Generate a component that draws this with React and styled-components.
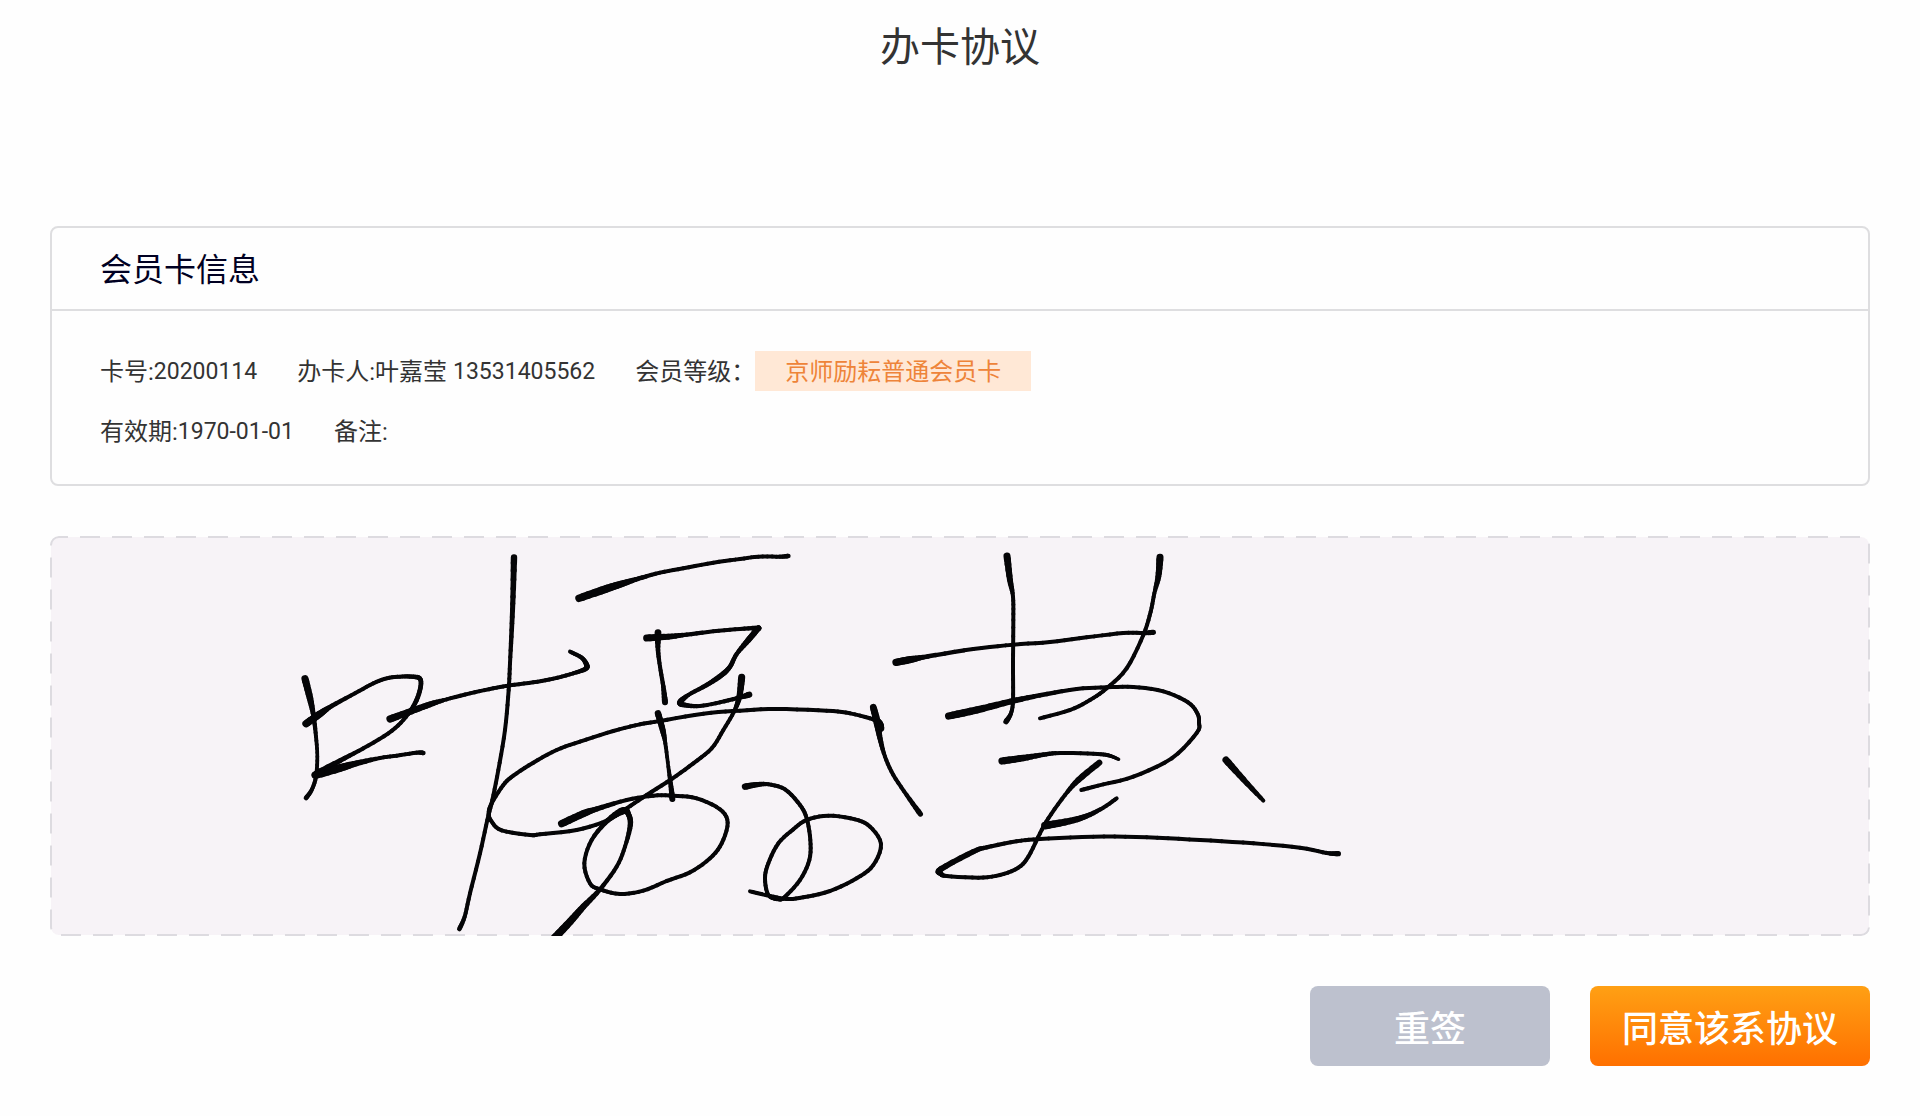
import styled, { createGlobalStyle } from 'styled-components';

const GlobalStyle = createGlobalStyle`
  body {
    margin: 0;
    background-color: #fefefe;
    color: #333;
    font-family: Roboto, "Noto Sans CJK SC", sans-serif;
  }
`;

const Page = styled.main`
  padding: 0 50px 50px;
`;

const Title = styled.h1`
  margin: 0 0 130px;
  font-size: 40px;
  font-weight: 400;
  line-height: 96px;
  text-align: center;
`;

const Card = styled.section`
  margin-bottom: 50px;
  border: 2px solid #dedee0;
  border-radius: 8px;
`;

const CardTitle = styled.h2`
  margin: 0;
  padding: 4px 48px 0;
  border-bottom: 2px solid #dedee0;
  color: #000022;
  font-size: 32px;
  font-weight: 400;
  line-height: 77px;
`;

const CardBody = styled.div`
  display: flex;
  flex-direction: column;
  gap: 20px;
  padding: 40px 48px 33px;
`;

const Row = styled.div`
  display: flex;
  flex-wrap: wrap;
  gap: 40px;
  font-size: 24px;
  line-height: 38px;
`;

const Item = styled.div`
  display: flex;
  align-items: flex-end;
  min-height: 40px;
  white-space: pre;
`;

const Digits = styled.span`
  font-size: 23px;
`;

const Level = styled.span`
  padding: 2px 30px 0;
  background-color: #ffe8d6;
  color: #ee8439;
`;

const Pad = styled.div`
  height: 400px;
  margin-bottom: 50px;
  border-radius: 8px;
  overflow: hidden;
`;

const Ink = styled.svg`
  display: block;
  width: 100%;
  height: 100%;
`;

const Frame = styled.rect`
  width: calc(100% - 2px);
  height: calc(100% - 2px);
  fill: #f7f3f7;
  stroke: #dddbe0;
  stroke-width: 2px;
`;

const Actions = styled.div`
  display: flex;
  justify-content: flex-end;
  gap: 40px;
`;

const Button = styled.button`
  width: ${(props) => (props.$primary ? '280px' : '240px')};
  height: 80px;
  padding: 0;
  border: none;
  border-radius: 8px;
  background: ${(props) => (props.$primary ? 'linear-gradient(#ffa014, #ff7000)' : '#bdc1ce')};
  color: white;
  font-family: inherit;
  font-size: 36px;
  font-weight: 500;
  cursor: pointer;
`;

// pen samples per character: [x, y, pen width], three units to a pixel
const signature = [
  {
    x: 690,
    strokes: [
      [[75, 446, 22], [90, 505, 20], [101, 560, 14], [108, 620, 12], [112, 680, 11], [108, 740, 12], [95, 780, 12], [78, 804, 14]],
      [[78, 581, 22], [118, 553, 22], [155, 528, 14], [225, 490, 12], [280, 460, 12], [320, 445, 12], [360, 440, 12], [395, 440, 13], [420, 446, 14], [421, 475, 14], [405, 520, 14], [370, 570, 12], [325, 610, 12], [250, 655, 12], [180, 692, 14], [105, 735, 20], [180, 714, 24], [230, 700, 18], [300, 684, 12], [350, 677, 12], [410, 668, 12], [430, 669, 14]],
      [[330, 567, 22], [395, 543, 20], [450, 523, 18], [500, 508, 12], [570, 490, 12], [640, 475, 12], [690, 466, 12], [760, 457, 12], [820, 446, 12], [880, 430, 12], [916, 417, 14], [920, 405, 16], [905, 383, 13], [870, 365, 12]],
      [[702, 82, 20], [699, 200, 16], [695, 300, 14], [690, 400, 12], [686, 480, 12], [675, 600, 12], [655, 720, 12], [637, 810, 12], [622, 870, 12], [600, 970, 12], [570, 1090, 12], [554, 1160, 12], [538, 1197, 14]],
    ],
  },
  {
    x: 1470,
    strokes: [
      [[117, 205, 22], [200, 176, 24], [250, 160, 20], [295, 146, 14], [360, 128, 12], [430, 115, 12], [520, 98, 12], [600, 87, 12], [655, 80, 12], [720, 80, 12], [745, 78, 14]],
      [[354, 308, 22], [354, 360, 14], [360, 410, 12], [370, 470, 13], [375, 517, 18]],
      [[320, 324, 22], [385, 320, 18], [440, 314, 13], [520, 304, 12], [600, 297, 12], [652, 294, 14], [650, 300, 18], [625, 330, 18], [590, 372, 13], [570, 410, 14], [545, 435, 16], [500, 465, 14], [445, 495, 12], [420, 518, 18], [440, 526, 14], [480, 528, 12], [540, 517, 12], [600, 502, 13], [628, 494, 18]],
      [[354, 550, 20], [368, 600, 18], [376, 640, 12], [385, 710, 11], [393, 770, 14], [397, 807, 18]],
      [[605, 442, 22], [598, 500, 18], [582, 545, 12], [550, 600, 12], [515, 655, 12], [460, 700, 12], [395, 747, 12], [320, 795, 12], [260, 835, 12], [200, 872, 12], [110, 900, 12], [0, 913, 12], [-30, 915, 12], [-115, 901, 12], [-145, 875, 12], [-154, 850, 12], [-145, 820, 12], [-110, 765, 12], [-80, 737, 12], [-20, 698, 12], [50, 660, 12], [120, 635, 12], [220, 603, 12], [300, 583, 12], [360, 573, 12], [490, 551, 12], [600, 542, 12], [710, 537, 12], [860, 542, 12], [930, 550, 12], [1000, 568, 12], [1018, 578, 18], [1022, 595, 22]],
      [[65, 881, 22], [130, 851, 22], [170, 837, 16], [260, 810, 12], [340, 797, 12], [400, 797, 12], [470, 805, 12], [540, 838, 12], [563, 878, 12], [545, 940, 12], [510, 985, 12], [450, 1027, 12], [380, 1053, 12], [310, 1082, 12], [240, 1092, 12], [180, 1078, 12], [150, 1060, 12], [133, 1000, 12], [155, 930, 12], [205, 870, 14], [250, 842, 22], [265, 852, 16], [271, 885, 16], [255, 950, 12], [230, 1010, 12], [180, 1078, 13], [130, 1130, 18], [90, 1175, 22], [40, 1228, 24]],
      [[1000, 532, 20], [1012, 580, 22], [1020, 625, 16], [1035, 680, 12], [1060, 735, 12], [1100, 795, 12], [1141, 852, 16]],
      [[615, 770, 20], [650, 764, 16], [685, 763, 12], [735, 778, 12], [780, 825, 12], [800, 865, 12], [811, 930, 12], [808, 990, 12], [780, 1050, 12], [735, 1100, 12], [715, 1108, 12], [685, 1095, 12], [675, 1045, 12], [685, 1000, 12], [715, 940, 12], [760, 898, 12], [800, 870, 12], [865, 857, 12], [945, 868, 12], [990, 890, 12], [1023, 942, 12], [1000, 1005, 12], [950, 1045, 12], [870, 1083, 12], [790, 1102, 12], [740, 1107, 12], [690, 1098, 12], [630, 1084, 12]],
    ],
  },
  {
    x: 2430,
    strokes: [
      [[108, 397, 22], [150, 389, 22], [205, 379, 14], [340, 357, 12], [460, 344, 12], [570, 336, 12], [680, 322, 12], [790, 309, 12], [850, 309, 12], [880, 307, 16]],
      [[441, 78, 22], [450, 150, 18], [459, 200, 12], [460, 270, 12], [459, 400, 12], [459, 510, 12], [453, 550, 12], [438, 575, 16]],
      [[900, 82, 22], [895, 140, 18], [883, 190, 12], [872, 245, 12], [850, 315, 12], [800, 415, 12], [740, 475, 12], [690, 510, 12], [630, 540, 12], [540, 565, 12]],
      [[266, 558, 22], [350, 540, 22], [450, 515, 18], [540, 496, 14], [650, 477, 12], [740, 472, 12], [820, 471, 12], [910, 484, 12], [984, 517, 12], [1012, 550, 12], [1017, 577, 12], [1010, 609, 12], [935, 685, 12], [820, 740, 12], [730, 763, 12], [664, 780, 12]],
      [[426, 693, 22], [490, 684, 20], [550, 674, 14], [600, 669, 12], [700, 671, 12], [745, 676, 12], [776, 688, 10]],
      [[718, 698, 18], [655, 750, 18], [615, 795, 12], [565, 865, 12], [540, 910, 12], [505, 980, 12], [475, 1013, 12], [420, 1035, 12], [355, 1043, 12], [260, 1038, 12], [243, 1031, 14], [243, 1017, 18], [340, 965, 16], [380, 952, 13], [470, 934, 12], [540, 927, 12], [700, 920, 12], [860, 922, 12], [1020, 930, 12], [1180, 940, 12], [1320, 953, 12], [1400, 969, 12], [1435, 971, 16]],
      [[555, 887, 24], [630, 873, 20], [680, 858, 16], [730, 833, 12], [770, 805, 12]],
      [[1098, 690, 22], [1150, 748, 18], [1210, 812, 12]],
    ],
  },
];

const STEPS = 5;

const spline = (a, b, c, d, t) =>
  0.5 * (2 * b + (c - a) * t + (2 * a - 5 * b + 4 * c - d) * t * t + (3 * b - a - 3 * c + d) * t * t * t);

const smooth = (points) => {
  const result = [points[0]];
  for (let i = 0; i < points.length - 1; i++) {
    const a = points[i - 1] || points[i];
    const b = points[i];
    const c = points[i + 1];
    const d = points[i + 2] || c;
    for (let s = 1; s <= STEPS; s++) {
      const t = s / STEPS;
      result.push([
        spline(a[0], b[0], c[0], d[0], t),
        spline(a[1], b[1], c[1], d[1], t),
        b[2] + (c[2] - b[2]) * t,
      ]);
    }
  }
  return result;
};

const Stroke = ({ points }) => {
  const dots = smooth(points);
  return dots.slice(1).map((dot, i) => (
    <line key={i} x1={dots[i][0]} y1={dots[i][1]} x2={dot[0]} y2={dot[1]} strokeWidth={dot[2]} />
  ));
};

const SignaturePad = () => {
  return (
    <Pad>
      <Ink role="img" aria-label="签名">
        <Frame x="1" y="1" rx="8" strokeDasharray="20 12" strokeDashoffset="11" />
        {signature.map((character) => (
          <g
            key={character.x}
            transform={`scale(${1 / 3}) translate(${character.x} -18)`}
            stroke="#050507"
            strokeLinecap="round"
          >
            {character.strokes.map((points, i) => (
              <Stroke key={i} points={points} />
            ))}
          </g>
        ))}
      </Ink>
    </Pad>
  );
};

const App = () => {
  return (
    <>
      <GlobalStyle />
      <Page>
        <Title>办卡协议</Title>
        <Card>
          <CardTitle>会员卡信息</CardTitle>
          <CardBody>
            <Row>
              <Item>卡号:<Digits>20200114</Digits></Item>
              <Item>办卡人:叶嘉莹 <Digits>13531405562</Digits></Item>
              <Item>会员等级：<Level>京师励耘普通会员卡</Level></Item>
            </Row>
            <Row>
              <Item>有效期:<Digits>1970-01-01</Digits></Item>
              <Item>备注:</Item>
            </Row>
          </CardBody>
        </Card>
        <SignaturePad />
        <Actions>
          <Button type="button">重签</Button>
          <Button type="button" $primary>同意该系协议</Button>
        </Actions>
      </Page>
    </>
  );
};

export default App;
